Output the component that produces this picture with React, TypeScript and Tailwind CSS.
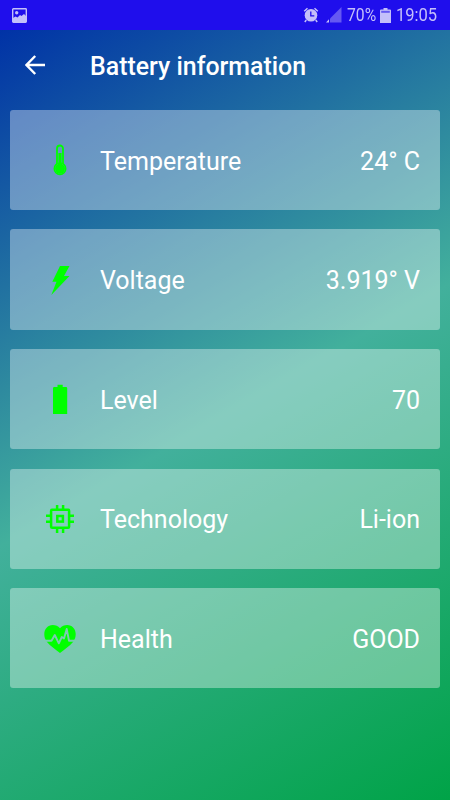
import type { ReactNode } from "react";

type Item = { label: string; value: string; icon: ReactNode };

const items: Item[] = [
  {
    label: "Temperature",
    value: "24° C",
    icon: (
      <svg viewBox="0 1 50 50" className="size-[50px]">
        <path d="M22 29V13.5a3 3 0 0 1 6 0V29" fill="none" stroke="#00ff00" strokeWidth="1.8" />
        <circle cx="25" cy="33.7" r="5.700" fill="none" stroke="#00ff00" strokeWidth="1.600" />
        <circle cx="25" cy="33.7" r="5" fill="#00ff00" />
        <path d="M25 18v14" stroke="#00ff00" strokeWidth="3.200" />
      </svg>
    ),
  },
  {
    label: "Voltage",
    value: "3.919° V",
    icon: (
      <svg viewBox="0 0 50 50" className="size-[50px]" fill="#00ff00">
        <path d="M25 10h9.5L29 20h5.5L16.3 39l5.2-13.3h-4.2z" />
      </svg>
    ),
  },
  {
    label: "Level",
    value: "70",
    icon: (
      <svg viewBox="0 0 50 50" className="size-[50px]" fill="#00ff00">
        <path d="M22.5 9.8h5.2V12h3.3q1.200 0 1.200 1.200V39H18V13.200Q18 12 19.200 12h3.300z" />
      </svg>
    ),
  },
  {
    label: "Technology",
    value: "Li-ion",
    icon: (
      <svg viewBox="0 0 50 50" className="size-[50px]" fill="none" stroke="#00ff00" strokeWidth="2.5">
        <rect x="16.1" y="14.800" width="18" height="18" rx="1" />
        <rect x="22.300" y="21" width="5.600" height="5.600" />
        <path d="M22.100 10v4M28.100 10v4M22.100 33.500V38M28.100 33.500V38M11 20.800h4.500M11 26.800h4.500M34.500 20.800H39M34.500 26.800H39" />
      </svg>
    ),
  },
  {
    label: "Health",
    value: "GOOD",
    icon: (
      <svg viewBox="0 0 50 50" className="size-[50px]">
        <mask id="pulse">
          <rect width="50" height="50" fill="#fff" />
          <path
            d="M9 26.700h7.500l3.300-5.700 4 8.300 3-6.300 2.200 1.500 2.700-9.500 2.300 11.700h8"
            fill="none"
            stroke="#000"
            strokeWidth="1.900"
            strokeLinejoin="round"
          />
        </mask>
        <path
          d="M25 14.300c2-2.200 4.300-3.200 7.200-3.200 5 0 8.500 4 8.500 9 0 3-.8 5.500-2.700 8C34.500 32.500 30 35 25 39c-5-4-9.500-6.500-13-10.900-1.900-2.500-2.700-5-2.700-8 0-5 3.500-9 8.500-9 2.900 0 5.200 1 7.200 3.200z"
          fill="#00ff00"
          mask="url(#pulse)"
        />
      </svg>
    ),
  },
];

function StatusBar() {
  return (
    <div className="flex h-[30px] items-center bg-[#1f0eec] pl-3 pr-[13px] text-[#c4bffa]">
      <svg viewBox="0 0 15 15" className="size-[15px]">
        <rect x=".7" y=".7" width="13.600" height="13.600" rx=".7" fill="none" stroke="currentColor" strokeWidth="1.4" />
        <circle cx="4.700" cy="4.700" r="1.700" fill="currentColor" />
        <path d="M1 10 3.500 8.500l2 1L8 7l1.500 1L12 6l2 2v6H1z" fill="currentColor" />
      </svg>
      <div className="ml-auto flex items-center">
        <svg viewBox="0 0 16 16" className="mr-[7px] size-4">
          <path d="M1.200 4.300 4.500 1.300M14.800 4.300l-3.300-3M3.300 13l-1.500 2M12.700 13l1.500 2" stroke="currentColor" strokeWidth="1.500" />
          <circle cx="8" cy="8.300" r="6.300" fill="currentColor" />
          <path d="M7.800 4.500v4.300h3.500" fill="none" stroke="#1f0eec" strokeWidth="1.300" />
        </svg>
        <svg viewBox="0 0 16 16" className="mr-[5px] size-4">
          <path d="M15.500 0v15.500H4V11.500z" fill="#6558f2" />
          <path d="M3 12.300v3.200H0z" fill="currentColor" />
        </svg>
        <span className="w-[30px] whitespace-nowrap">
          <span className="inline-block origin-left scale-x-[0.85] text-[18.5px] leading-[30px]">70%</span>
        </span>
        <svg viewBox="0 0 11 15" className="ml-[3px] mr-[5px] h-[15px] w-[11px]">
          <path d="M3.500 0h4v1.500h2.500q1 0 1 1V15H0V2.500q0-1 1-1h2.500z" fill="currentColor" />
          <path d="M1.200 2.800h8.600v2H1.200z" fill="#6558f2" />
        </svg>
        <span className="w-[41px] whitespace-nowrap">
          <span className="inline-block origin-left scale-x-[0.87] text-[19px] leading-[30px]">19:05</span>
        </span>
      </div>
    </div>
  );
}

export default function App() {
  return (
    <div className="flex h-[800px] w-[450px] flex-col overflow-hidden font-['Roboto',sans-serif] text-white">
      <StatusBar />
      <div className="flex-1 bg-[linear-gradient(149.7deg,#0032a6_0%,#42b09c_50%,#00a347_100%)]">
        <header className="flex h-[79.8px] items-center pb-[9.8px] pl-[25px]">
          <svg viewBox="0 0 20 20" className="mr-[45px] size-5" fill="none" stroke="currentColor" strokeWidth="2.400">
            <path d="M20 10H2M10.200 1 1.500 10l8.700 9" />
          </svg>
          <h1 className="pt-[3px] text-[24.9px] font-medium leading-[30px]">Battery information</h1>
        </header>
        <div className="flex flex-col gap-[19.3px] px-2.5">
          {items.map((item) => (
            <div key={item.label} className="flex h-[100.3px] items-center rounded-[3px] bg-white/36 pl-[25px] pr-5 text-[25px]">
              <span className="pt-0.5">{item.icon}</span>
              <span className="ml-[15px] pt-[3px]">{item.label}</span>
              <span className="ml-auto pt-[3px]">{item.value}</span>
            </div>
          ))}
        </div>
      </div>
    </div>
  );
}
